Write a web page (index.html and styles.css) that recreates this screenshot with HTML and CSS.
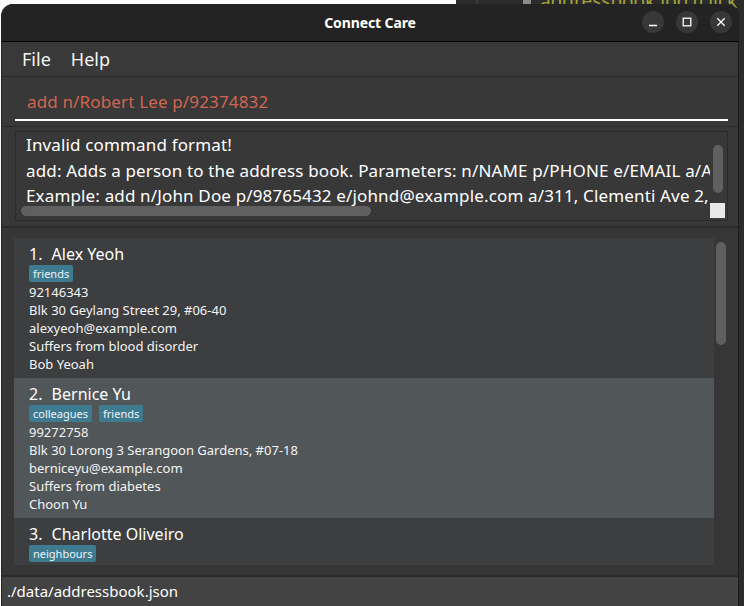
FILE: index.html
```html
<!DOCTYPE html>
<html>
<head>
<meta charset="utf-8">
<title>Connect Care</title>
<link rel="stylesheet" href="styles.css">
</head>
<body>
<div class="desktop">
  <div class="editor">
    <span class="editor-rule"></span>
    <span class="editor-icon"></span>
    <span class="editor-text">addressbook.log (click</span>
  </div>

  <div class="window">
    <header class="titlebar">
      <span class="title">Connect Care</span>
      <div class="controls">
        <button class="ctl" aria-label="Minimize">
          <svg width="10" height="10" viewBox="0 0 10 10"><path d="M1 8.5h8" stroke="#fff" stroke-width="1.3" fill="none"/></svg>
        </button>
        <button class="ctl" aria-label="Maximize">
          <svg width="10" height="10" viewBox="0 0 10 10"><rect x="1.2" y="1.2" width="7.6" height="7.6" stroke="#fff" stroke-width="1.3" fill="none"/></svg>
        </button>
        <button class="ctl" aria-label="Close">
          <svg width="10" height="10" viewBox="0 0 10 10"><path d="M1.3 1.3l7.4 7.4M8.7 1.3l-7.4 7.4" stroke="#fff" stroke-width="1.3" fill="none"/></svg>
        </button>
      </div>
    </header>

    <nav class="menubar">
      <span class="menu-item">File</span>
      <span class="menu-item">Help</span>
    </nav>

    <section class="command-pane">
      <div class="command-field">add n/Robert Lee p/92374832</div>
    </section>

    <section class="result-pane">
      <div class="result-box">
        <div class="result-text">Invalid command format!
add: Adds a person to the address book. Parameters: n/NAME p/PHONE e/EMAIL a/ADDRESS [t/TAG]...
Example: add n/John Doe p/98765432 e/johnd@example.com a/311, Clementi Ave 2, #02-25 t/friends t/owesMoney</div>
        <div class="vscroll"></div>
        <div class="hscroll"></div>
        <div class="corner"></div>
      </div>
    </section>

    <section class="list-pane">
      <div class="list-view">
        <article class="card">
          <div class="name-row"><span class="id">1. </span><span class="name">Alex Yeoh</span></div>
          <div class="tags"><span class="tag">friends</span></div>
          <div class="detail">92146343</div>
          <div class="detail">Blk 30 Geylang Street 29, #06-40</div>
          <div class="detail">alexyeoh@example.com</div>
          <div class="detail">Suffers from blood disorder</div>
          <div class="detail">Bob Yeoah</div>
        </article>
        <article class="card card-alt">
          <div class="name-row"><span class="id">2. </span><span class="name">Bernice Yu</span></div>
          <div class="tags"><span class="tag">colleagues</span><span class="tag">friends</span></div>
          <div class="detail">99272758</div>
          <div class="detail">Blk 30 Lorong 3 Serangoon Gardens, #07-18</div>
          <div class="detail">berniceyu@example.com</div>
          <div class="detail">Suffers from diabetes</div>
          <div class="detail">Choon Yu</div>
        </article>
        <article class="card">
          <div class="name-row"><span class="id">3. </span><span class="name">Charlotte Oliveiro</span></div>
          <div class="tags"><span class="tag">neighbours</span></div>
        </article>
      </div>
      <div class="list-scroll"></div>
    </section>

    <footer class="statusbar">./data/addressbook.json</footer>
  </div>
</div>
</body>
</html>
```

FILE: styles.css
```css
* { box-sizing: border-box; }

html, body {
  margin: 0;
  padding: 0;
}

body {
  width: 744px;
  height: 606px;
  overflow: hidden;
  background: #fafafa;
  font-family: "Noto Sans", "Open Sans", sans-serif;
}

.desktop {
  position: relative;
  width: 744px;
  height: 606px;
  overflow: hidden;
}

.editor {
  position: absolute;
  left: 456px;
  top: 0;
  width: 288px;
  height: 606px;
  background: #2b2b2b;
  overflow: hidden;
}

.editor-rule {
  position: absolute;
  left: 20px;
  top: 0;
  width: 2px;
  height: 20px;
  background: #3a3a3a;
}

.editor-icon {
  position: absolute;
  left: 67px;
  top: -4px;
  width: 8px;
  height: 9px;
  background: #8c8c8c;
  border-radius: 1px;
}

.editor-text {
  position: absolute;
  left: 84px;
  top: -12px;
  font-size: 19px;
  color: #a3a33c;
  white-space: nowrap;
}

.window {
  position: absolute;
  left: 1px;
  top: 4px;
  width: 738px;
  height: 602px;
  display: flex;
  flex-direction: column;
  background: #383838;
  border-left: 1px solid #262626;
  border-right: 1px solid #1c1c1c;
  border-radius: 12px 12px 0 0;
  overflow: hidden;
}

.titlebar {
  height: 38px;
  flex: none;
  display: flex;
  align-items: center;
  justify-content: center;
  position: relative;
  background: #232323;
  border-bottom: 1px solid #000;
}

.title {
  color: #ffffff;
  font-weight: 700;
  font-size: 14px;
  letter-spacing: -0.1px;
}

.controls {
  position: absolute;
  right: 6px;
  top: 7px;
  display: flex;
  gap: 12px;
}

.ctl {
  width: 22px;
  height: 22px;
  border: none;
  padding: 0;
  border-radius: 50%;
  background: #383838;
  display: flex;
  align-items: center;
  justify-content: center;
}

.menubar {
  height: 35px;
  flex: none;
  display: flex;
  align-items: center;
  padding-left: 10px;
  background: #393939;
  border-bottom: 1px solid #2b2b2b;
}

.menu-item {
  padding: 0 10px;
  font-size: 18px;
  color: #f4f4f4;
}

.command-pane {
  flex: none;
  height: 50px;
  padding: 13px 10px 5px 13px;
  background: #383838;
  border-bottom: 1px solid #2b2b2b;
}

.command-field {
  height: 31px;
  padding: 0 0 5px 12px;
  font-size: 17px;
  line-height: 24px;
  letter-spacing: 0.15px;
  color: #d06651;
  border-bottom: 2px solid #ffffff;
  white-space: nowrap;
}

.result-pane {
  flex: none;
  height: 101px;
  padding: 4px 10px 5px 13px;
  background: #383838;
  border-bottom: 2px solid #2b2b2b;
}

.result-box {
  position: relative;
  height: 90px;
  border: 1px solid #2a2a2a;
  background: #383838;
  overflow: hidden;
}

.result-text {
  padding: 0 0 0 10px;
  font-size: 17px;
  line-height: 25.5px;
  letter-spacing: 0.15px;
  color: #ffffff;
  white-space: pre;
  height: 74px;
  width: 694px;
  overflow: hidden;
}

.vscroll {
  position: absolute;
  left: 697px;
  top: 13px;
  width: 10px;
  height: 48px;
  border-radius: 5px;
  background: #606060;
}

.hscroll {
  position: absolute;
  left: 5px;
  top: 74px;
  width: 350px;
  height: 10px;
  border-radius: 5px;
  background: #606060;
}

.corner {
  position: absolute;
  left: 694px;
  top: 71px;
  width: 15px;
  height: 15px;
  background: #e8e8e8;
}

.list-pane {
  position: relative;
  flex: none;
  height: 349px;
  padding: 10px 24px 10px 12px;
  background: #363636;
  border-bottom: 2px solid #2b2b2b;
}

.list-view {
  height: 327px;
  overflow: hidden;
}

.card {
  height: 140px;
  padding: 6px 0 5px 15px;
  background: #3c3e40;
}

.card-alt {
  background: #515658;
}

.name-row {
  display: flex;
  gap: 5px;
  height: 20px;
  line-height: 20px;
  font-size: 16px;
  color: #ffffff;
  white-space: pre;
}

.tags {
  display: flex;
  gap: 7px;
  margin: 1px 0;
  height: 17px;
}

.tag {
  padding: 0 4px;
  height: 17px;
  line-height: 17px;
  font-size: 11px;
  color: #eef3f5;
  background: #3e7b91;
  border-radius: 2px;
}

.detail {
  height: 18px;
  line-height: 18px;
  font-size: 13px;
  color: #f4f4f4;
  white-space: nowrap;
}

.list-scroll {
  position: absolute;
  left: 714px;
  top: 14px;
  width: 10px;
  height: 103px;
  border-radius: 5px;
  background: #5f5f5f;
}

.statusbar {
  flex: 1;
  padding: 3px 0 0 5px;
  background: #434343;
  font-size: 15px;
  line-height: 22px;
  color: #ffffff;
}
```
